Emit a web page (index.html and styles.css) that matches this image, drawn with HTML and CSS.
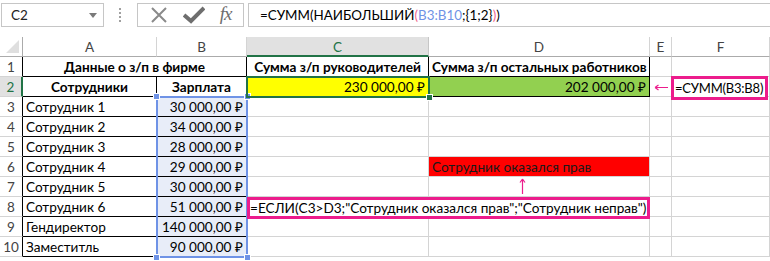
FILE: index.html
```html
<!DOCTYPE html>
<html>
<head>
    <title>Excel - НАИБОЛЬШИЙ</title>
    <link rel="stylesheet" href="styles.css">
</head>
<body>
    <div class="toolbar">
        <div class="namebox">
            <span>C2</span>
            <svg class="caret" width="8" height="5" viewBox="0 0 8 5"><path d="M0 0h8L4 5z" fill="#7a7a7a"/></svg>
        </div>
        <div class="grip">
            <svg width="3" height="14" viewBox="0 0 3 14"><g fill="#a0a0a0"><rect x="0" y="0" width="2" height="2"/><rect x="0" y="4" width="2" height="2"/><rect x="0" y="8" width="2" height="2"/><rect x="0" y="12" width="2" height="2"/></g></svg>
        </div>
        <div class="fx-buttons">
            <svg width="18" height="18" viewBox="0 0 18 18"><path d="M2 2L16 16M16 2L2 16" stroke="#8a8a8a" stroke-width="2"/></svg>
            <svg width="22" height="18" viewBox="0 0 22 18"><path d="M1 9L8 15L21 2" stroke="#6e6e6e" stroke-width="4" fill="none"/></svg>
            <span class="fx">fx</span>
        </div>
        <div class="formula">=СУММ(НАИБОЛЬШИЙ<span class="pk">(</span><span class="bl">B3:B10</span>;{1;2}<span class="pk">)</span>)</div>
    </div>

    <div class="sheet">
        <div class="corner"><span class="tri"></span></div>
        <div class="colhead">A</div>
        <div class="colhead">B</div>
        <div class="colhead active">C</div>
        <div class="colhead">D</div>
        <div class="colhead">E</div>
        <div class="colhead">F</div>

        <div class="rowhead">1</div>
        <div class="cell bold center span2 blk">Данные о з/п в фирме</div>
        <div class="cell bold center blk">Сумма з/п руководителей</div>
        <div class="cell bold center blk">Сумма з/п остальных работников</div>
        <div class="cell"></div>
        <div class="cell"></div>

        <div class="rowhead active">2</div>
        <div class="cell bold center blk">Сотрудники</div>
        <div class="cell bold center blk">Зарплата</div>
        <div class="cell right blk yellow">230 000,00 ₽</div>
        <div class="cell right blk green">202 000,00 ₽</div>
        <div class="cell"></div>
        <div class="cell"></div>

        <div class="rowhead">3</div>
        <div class="cell blk">Сотрудник 1</div>
        <div class="cell right blk sel">30 000,00 ₽</div>
        <div class="cell"></div><div class="cell"></div><div class="cell"></div><div class="cell"></div>

        <div class="rowhead">4</div>
        <div class="cell blk">Сотрудник 2</div>
        <div class="cell right blk sel">34 000,00 ₽</div>
        <div class="cell"></div><div class="cell"></div><div class="cell"></div><div class="cell"></div>

        <div class="rowhead">5</div>
        <div class="cell blk">Сотрудник 3</div>
        <div class="cell right blk sel">28 000,00 ₽</div>
        <div class="cell"></div><div class="cell"></div><div class="cell"></div><div class="cell"></div>

        <div class="rowhead">6</div>
        <div class="cell blk">Сотрудник 4</div>
        <div class="cell right blk sel">29 000,00 ₽</div>
        <div class="cell"></div>
        <div class="cell red">Сотрудник оказался прав</div>
        <div class="cell"></div><div class="cell"></div>

        <div class="rowhead">7</div>
        <div class="cell blk">Сотрудник 5</div>
        <div class="cell right blk sel">30 000,00 ₽</div>
        <div class="cell"></div><div class="cell"></div><div class="cell"></div><div class="cell"></div>

        <div class="rowhead">8</div>
        <div class="cell blk">Сотрудник 6</div>
        <div class="cell right blk sel">51 000,00 ₽</div>
        <div class="cell"></div><div class="cell"></div><div class="cell"></div><div class="cell"></div>

        <div class="rowhead">9</div>
        <div class="cell blk">Гендиректор</div>
        <div class="cell right blk sel">140 000,00 ₽</div>
        <div class="cell"></div><div class="cell"></div><div class="cell"></div><div class="cell"></div>

        <div class="rowhead">10</div>
        <div class="cell blk">Заместитль</div>
        <div class="cell right blk sel">90 000,00 ₽</div>
        <div class="cell"></div><div class="cell"></div><div class="cell"></div><div class="cell"></div>

        <!-- overlays -->
        <div class="range-box">
            <span class="h tl"></span><span class="h tr"></span><span class="h bl2"></span><span class="h br"></span>
        </div>
        <div class="active-cell"><span class="fill-handle"></span></div>
        <div class="note note-sum">=СУММ(B3:B8)</div>
        <div class="note note-if">=ЕСЛИ(C3&gt;D3;"Сотрудник оказался прав";"Сотрудник неправ")</div>
        <svg class="arrow arrow-left" width="14" height="7" viewBox="0 0 14 7"><path d="M1 3.5H14M1 3.5L4.5 1M1 3.5L4.5 6" stroke="#ec1c8c" stroke-width="1.2" fill="none"/></svg>
        <svg class="arrow arrow-up" width="7" height="16" viewBox="0 0 7 16"><path d="M3.5 1V16M3.5 1L1 4.5M3.5 1L6 4.5" stroke="#ec1c8c" stroke-width="1.2" fill="none"/></svg>
    </div>
</body>
</html>
```

FILE: styles.css
```css
:root {
    --grid: #d4d4d4;
    --head-line: #ababab;
    --xl-green: #217346;
    --pink: #ec1c8c;
    --ref-blue: #6f93e6;
}

body {
    margin: 0;
    background: #fff;
    font-family: Lato, "Liberation Sans", sans-serif;
    color: #000;
    width: 770px;
    height: 261px;
    overflow: hidden;
}

/* formula bar */
.toolbar {
    height: 37px;
    display: flex;
    align-items: flex-start;
    padding-top: 3px;
    box-sizing: border-box;
    background: #fff;
}

.namebox {
    margin-left: 1px;
    width: 103px;
    height: 24px;
    box-sizing: border-box;
    border: 1px solid #c6c6c6;
    display: flex;
    align-items: center;
    justify-content: space-between;
    padding: 0 6px 0 9px;
    font-size: 13.5px;
    color: #222;
}

.grip {
    width: 33px;
    height: 24px;
    display: flex;
    align-items: center;
    justify-content: center;
}

.fx-buttons {
    width: 107px;
    height: 24px;
    box-sizing: border-box;
    border: 1px solid #c6c6c6;
    display: flex;
    align-items: center;
    justify-content: space-around;
    padding: 0 4px;
}

.fx {
    font-family: "Liberation Serif", serif;
    font-style: italic;
    font-size: 19px;
    color: #6e6e6e;
    letter-spacing: -1px;
    margin-top: -2px;
}

.formula {
    margin-left: 4px;
    flex: 1;
    height: 24px;
    box-sizing: border-box;
    border: 1px solid #c6c6c6;
    border-right: none;
    padding-left: 11px;
    line-height: 22px;
    font-size: 13.4px;
    color: #000;
    white-space: nowrap;
}

.pk { color: #f0668f; }
.bl { color: #6f93e6; }

/* sheet grid */
.sheet {
    position: relative;
    display: grid;
    grid-template-columns: 23px 134px 90px 182px 221px 22px 98px;
    grid-auto-rows: 20px;
    font-size: 13.6px;
}

.corner {
    border-right: 1px solid var(--head-line);
    border-bottom: 1px solid var(--head-line);
    position: relative;
}

.tri {
    position: absolute;
    right: 3px;
    bottom: 3px;
    width: 0;
    height: 0;
    border-left: 13px solid transparent;
    border-bottom: 13px solid #dfdfdf;
}

.colhead {
    border-right: 1px solid var(--grid);
    border-bottom: 1px solid var(--head-line);
    text-align: center;
    font-size: 13.5px;
    line-height: 20px;
    color: #444;
}

.colhead.active {
    background: #e1e1e1;
    color: var(--xl-green);
    border-bottom: 2px solid var(--xl-green);
    border-right-color: #c6c6c6;
}

.rowhead {
    border-right: 1px solid #000;
    border-bottom: 1px solid var(--grid);
    text-align: center;
    font-size: 13.5px;
    line-height: 20px;
    color: #444;
}

.rowhead.active {
    background: #e1e1e1;
    color: var(--xl-green);
    border-right: 2px solid var(--xl-green);
}

.cell {
    border-right: 1px solid var(--grid);
    border-bottom: 1px solid var(--grid);
    padding: 0 3px;
    line-height: 21px;
    white-space: nowrap;
    overflow: visible;
}

.cell.blk {
    border-right-color: #000;
    border-bottom-color: #000;
}

.bold { font-weight: 700; }
.center { text-align: center; }
.right { text-align: right; }
.span2 { grid-column: span 2; }

.yellow { background: #ffff00; }
.green { background: #92d050; }
.red { background: #ff0000; color: #1a1a1a; }
.sel { background: #e8edf8; }

/* overlays */
.range-box {
    position: absolute;
    left: 156px;
    top: 59px;
    width: 92px;
    height: 162px;
    box-sizing: border-box;
    border: 2px solid var(--ref-blue);
}

.h {
    position: absolute;
    width: 5px;
    height: 5px;
    background: var(--ref-blue);
    border: 1px solid #fff;
}

.h.tl { left: -5px; top: -5px; }
.h.tr { right: -5px; top: -5px; }
.h.bl2 { left: -5px; bottom: -5px; }
.h.br { right: -5px; bottom: -5px; }

.active-cell {
    position: absolute;
    left: 246px;
    top: 39px;
    width: 184px;
    height: 22px;
    box-sizing: border-box;
    border: 2px solid var(--xl-green);
}

.fill-handle {
    position: absolute;
    right: -5px;
    bottom: -5px;
    width: 5px;
    height: 5px;
    background: var(--xl-green);
    border: 1px solid #fff;
}

.note {
    position: absolute;
    box-sizing: border-box;
    border: 3px solid var(--pink);
    background: #fff;
    font-size: 13.6px;
    white-space: nowrap;
}

.note-sum {
    left: 671px;
    top: 39px;
    width: 97px;
    height: 24px;
    line-height: 18px;
    padding-left: 1px;
    font-size: 13px;
    letter-spacing: -0.2px;
}

.note-if {
    left: 247px;
    top: 160px;
    width: 403px;
    height: 22px;
    line-height: 16px;
    padding-left: 0;
}

.arrow { position: absolute; }
.arrow-left { left: 654px; top: 47px; }
.arrow-up { left: 519px; top: 141px; }
```
